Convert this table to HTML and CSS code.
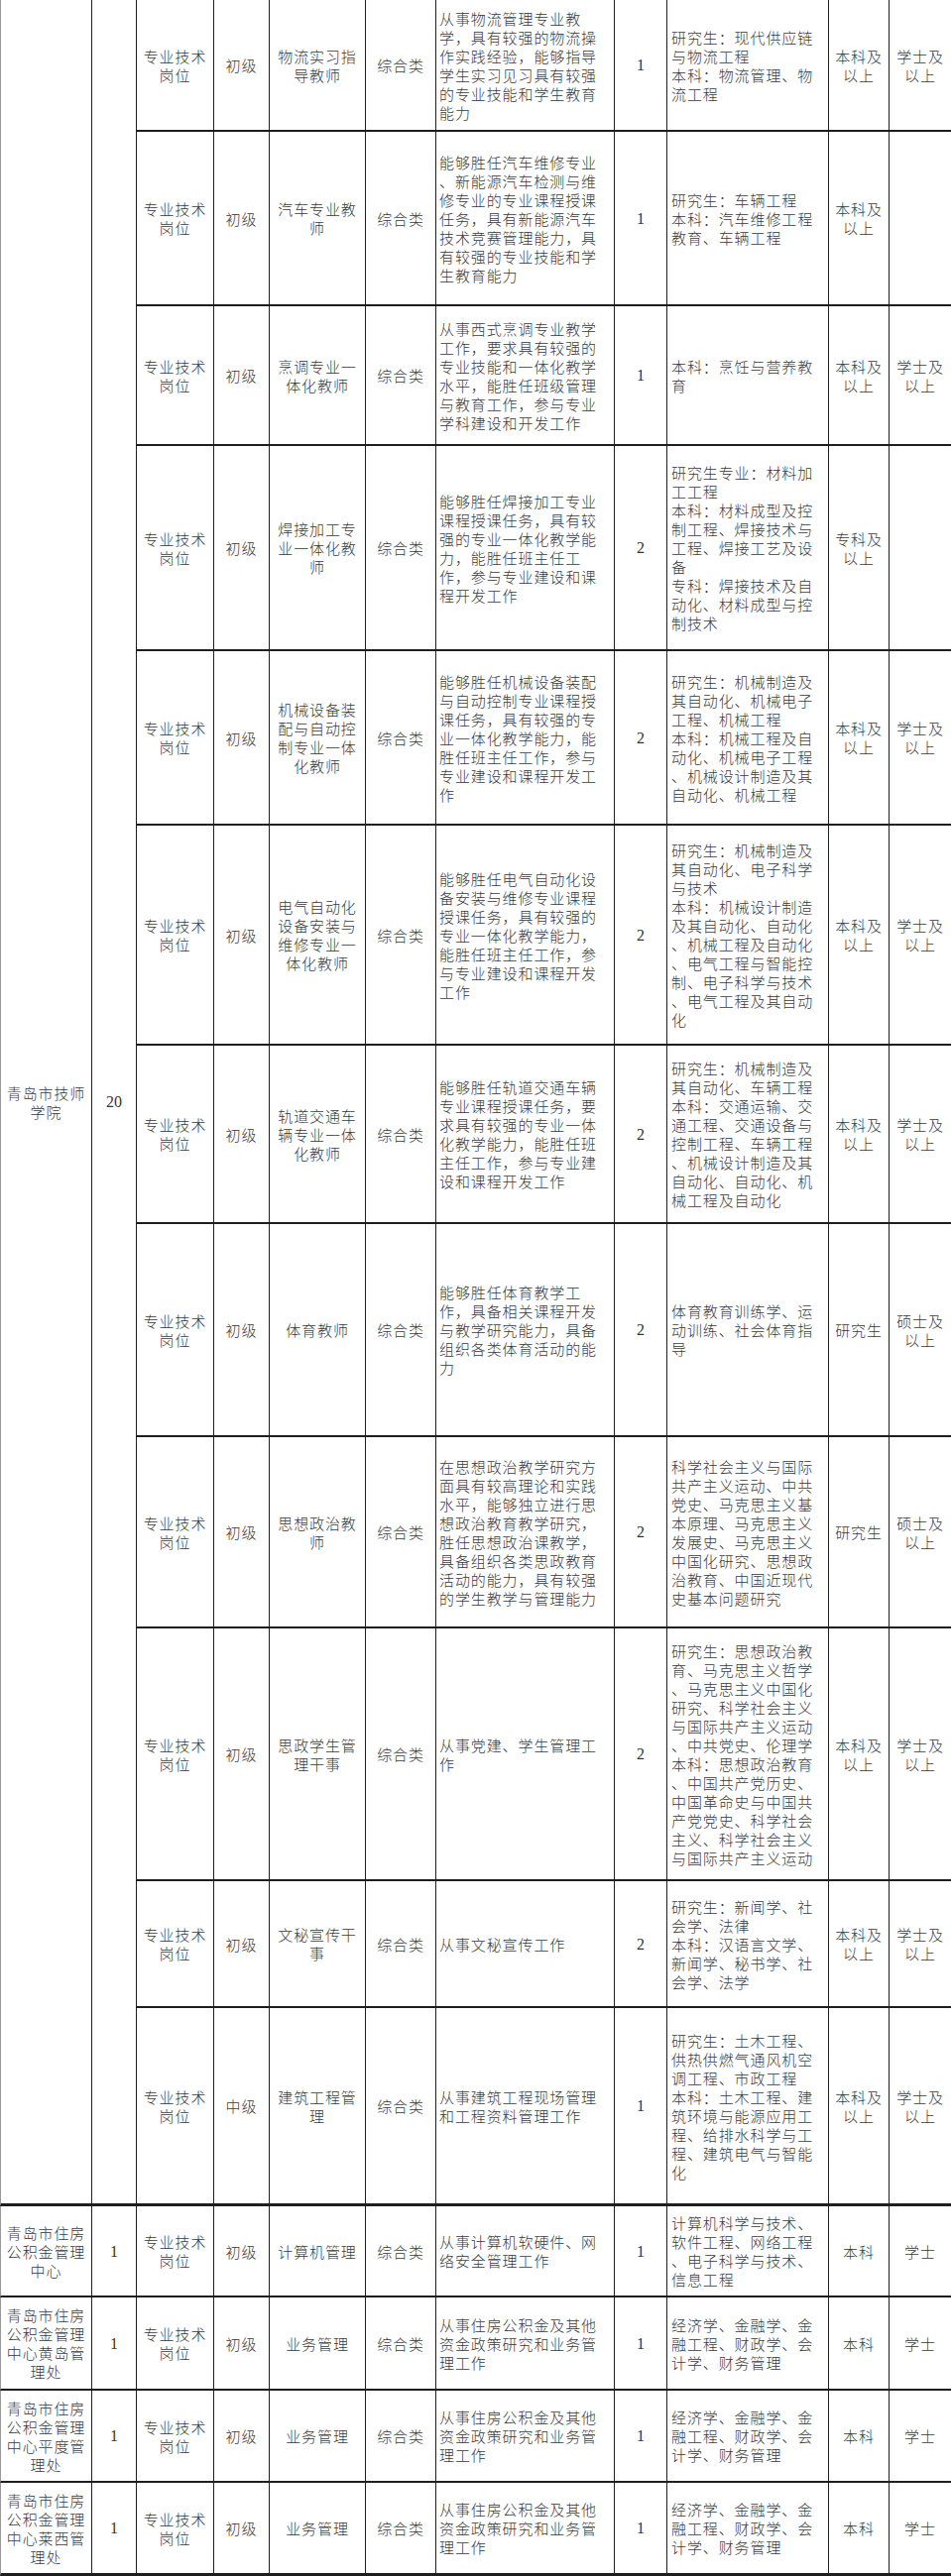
FILE: index.html
```html
<!DOCTYPE html>
<html lang="zh-CN">
<head>
<meta charset="utf-8">
<title>岗位表</title>
<link rel="stylesheet" href="styles.css">
</head>
<body>
<div class="sheet">
  <div class="cell c org span12 gend"><p>青岛市技师<br>学院</p></div>
  <div class="cell c num span12 gend"><p>20</p></div>

  <!-- row 1 -->
  <div class="cell c"><p>专业技术<br>岗位</p></div>
  <div class="cell c"><p>初级</p></div>
  <div class="cell c"><p>物流实习指<br>导教师</p></div>
  <div class="cell c"><p>综合类</p></div>
  <div class="cell l"><p>从事物流管理专业教<br>学，具有较强的物流操<br>作实践经验，能够指导<br>学生实习见习具有较强<br>的专业技能和学生教育<br>能力</p></div>
  <div class="cell c num"><p>1</p></div>
  <div class="cell l m"><p>研究生：现代供应链<br>与物流工程<br>本科：物流管理、物<br>流工程</p></div>
  <div class="cell c"><p>本科及<br>以上</p></div>
  <div class="cell c last"><p>学士及<br>以上</p></div>

  <!-- row 2 -->
  <div class="cell c"><p>专业技术<br>岗位</p></div>
  <div class="cell c"><p>初级</p></div>
  <div class="cell c"><p>汽车专业教<br>师</p></div>
  <div class="cell c"><p>综合类</p></div>
  <div class="cell l"><p>能够胜任汽车维修专业<br>、新能源汽车检测与维<br>修专业的专业课程授课<br>任务，具有新能源汽车<br>技术竞赛管理能力，具<br>有较强的专业技能和学<br>生教育能力</p></div>
  <div class="cell c num"><p>1</p></div>
  <div class="cell l m"><p>研究生：车辆工程<br>本科：汽车维修工程<br>教育、车辆工程</p></div>
  <div class="cell c"><p>本科及<br>以上</p></div>
  <div class="cell c last"><p></p></div>

  <!-- row 3 -->
  <div class="cell c"><p>专业技术<br>岗位</p></div>
  <div class="cell c"><p>初级</p></div>
  <div class="cell c"><p>烹调专业一<br>体化教师</p></div>
  <div class="cell c"><p>综合类</p></div>
  <div class="cell l"><p>从事西式烹调专业教学<br>工作，要求具有较强的<br>专业技能和一体化教学<br>水平，能胜任班级管理<br>与教育工作，参与专业<br>学科建设和开发工作</p></div>
  <div class="cell c num"><p>1</p></div>
  <div class="cell l m"><p>本科：烹饪与营养教<br>育</p></div>
  <div class="cell c"><p>本科及<br>以上</p></div>
  <div class="cell c last"><p>学士及<br>以上</p></div>

  <!-- row 4 -->
  <div class="cell c"><p>专业技术<br>岗位</p></div>
  <div class="cell c"><p>初级</p></div>
  <div class="cell c"><p>焊接加工专<br>业一体化教<br>师</p></div>
  <div class="cell c"><p>综合类</p></div>
  <div class="cell l"><p>能够胜任焊接加工专业<br>课程授课任务，具有较<br>强的专业一体化教学能<br>力，能胜任班主任工<br>作，参与专业建设和课<br>程开发工作</p></div>
  <div class="cell c num"><p>2</p></div>
  <div class="cell l m"><p>研究生专业：材料加<br>工工程<br>本科：材料成型及控<br>制工程、焊接技术与<br>工程、焊接工艺及设<br>备<br>专科：焊接技术及自<br>动化、材料成型与控<br>制技术</p></div>
  <div class="cell c"><p>专科及<br>以上</p></div>
  <div class="cell c last"><p></p></div>

  <!-- row 5 -->
  <div class="cell c"><p>专业技术<br>岗位</p></div>
  <div class="cell c"><p>初级</p></div>
  <div class="cell c"><p>机械设备装<br>配与自动控<br>制专业一体<br>化教师</p></div>
  <div class="cell c"><p>综合类</p></div>
  <div class="cell l"><p>能够胜任机械设备装配<br>与自动控制专业课程授<br>课任务，具有较强的专<br>业一体化教学能力，能<br>胜任班主任工作，参与<br>专业建设和课程开发工<br>作</p></div>
  <div class="cell c num"><p>2</p></div>
  <div class="cell l m"><p>研究生：机械制造及<br>其自动化、机械电子<br>工程、机械工程<br>本科：机械工程及自<br>动化、机械电子工程<br>、机械设计制造及其<br>自动化、机械工程</p></div>
  <div class="cell c"><p>本科及<br>以上</p></div>
  <div class="cell c last"><p>学士及<br>以上</p></div>

  <!-- row 6 -->
  <div class="cell c"><p>专业技术<br>岗位</p></div>
  <div class="cell c"><p>初级</p></div>
  <div class="cell c"><p>电气自动化<br>设备安装与<br>维修专业一<br>体化教师</p></div>
  <div class="cell c"><p>综合类</p></div>
  <div class="cell l"><p>能够胜任电气自动化设<br>备安装与维修专业课程<br>授课任务，具有较强的<br>专业一体化教学能力，<br>能胜任班主任工作，参<br>与专业建设和课程开发<br>工作</p></div>
  <div class="cell c num"><p>2</p></div>
  <div class="cell l m"><p>研究生：机械制造及<br>其自动化、电子科学<br>与技术<br>本科：机械设计制造<br>及其自动化、自动化<br>、机械工程及自动化<br>、电气工程与智能控<br>制、电子科学与技术<br>、电气工程及其自动<br>化</p></div>
  <div class="cell c"><p>本科及<br>以上</p></div>
  <div class="cell c last"><p>学士及<br>以上</p></div>

  <!-- row 7 -->
  <div class="cell c"><p>专业技术<br>岗位</p></div>
  <div class="cell c"><p>初级</p></div>
  <div class="cell c"><p>轨道交通车<br>辆专业一体<br>化教师</p></div>
  <div class="cell c"><p>综合类</p></div>
  <div class="cell l"><p>能够胜任轨道交通车辆<br>专业课程授课任务，要<br>求具有较强的专业一体<br>化教学能力，能胜任班<br>主任工作，参与专业建<br>设和课程开发工作</p></div>
  <div class="cell c num"><p>2</p></div>
  <div class="cell l m"><p>研究生：机械制造及<br>其自动化、车辆工程<br>本科：交通运输、交<br>通工程、交通设备与<br>控制工程、车辆工程<br>、机械设计制造及其<br>自动化、自动化、机<br>械工程及自动化</p></div>
  <div class="cell c"><p>本科及<br>以上</p></div>
  <div class="cell c last"><p>学士及<br>以上</p></div>

  <!-- row 8 -->
  <div class="cell c"><p>专业技术<br>岗位</p></div>
  <div class="cell c"><p>初级</p></div>
  <div class="cell c"><p>体育教师</p></div>
  <div class="cell c"><p>综合类</p></div>
  <div class="cell l"><p>能够胜任体育教学工<br>作，具备相关课程开发<br>与教学研究能力，具备<br>组织各类体育活动的能<br>力</p></div>
  <div class="cell c num"><p>2</p></div>
  <div class="cell l m"><p>体育教育训练学、运<br>动训练、社会体育指<br>导</p></div>
  <div class="cell c"><p>研究生</p></div>
  <div class="cell c last"><p>硕士及<br>以上</p></div>

  <!-- row 9 -->
  <div class="cell c"><p>专业技术<br>岗位</p></div>
  <div class="cell c"><p>初级</p></div>
  <div class="cell c"><p>思想政治教<br>师</p></div>
  <div class="cell c"><p>综合类</p></div>
  <div class="cell l"><p>在思想政治教学研究方<br>面具有较高理论和实践<br>水平，能够独立进行思<br>想政治教育教学研究，<br>胜任思想政治课教学，<br>具备组织各类思政教育<br>活动的能力，具有较强<br>的学生教学与管理能力</p></div>
  <div class="cell c num"><p>2</p></div>
  <div class="cell l m"><p>科学社会主义与国际<br>共产主义运动、中共<br>党史、马克思主义基<br>本原理、马克思主义<br>发展史、马克思主义<br>中国化研究、思想政<br>治教育、中国近现代<br>史基本问题研究</p></div>
  <div class="cell c"><p>研究生</p></div>
  <div class="cell c last"><p>硕士及<br>以上</p></div>

  <!-- row 10 -->
  <div class="cell c"><p>专业技术<br>岗位</p></div>
  <div class="cell c"><p>初级</p></div>
  <div class="cell c"><p>思政学生管<br>理干事</p></div>
  <div class="cell c"><p>综合类</p></div>
  <div class="cell l"><p>从事党建、学生管理工<br>作</p></div>
  <div class="cell c num"><p>2</p></div>
  <div class="cell l m"><p>研究生：思想政治教<br>育、马克思主义哲学<br>、马克思主义中国化<br>研究、科学社会主义<br>与国际共产主义运动<br>、中共党史、伦理学<br>本科：思想政治教育<br>、中国共产党历史、<br>中国革命史与中国共<br>产党党史、科学社会<br>主义、科学社会主义<br>与国际共产主义运动</p></div>
  <div class="cell c"><p>本科及<br>以上</p></div>
  <div class="cell c last"><p>学士及<br>以上</p></div>

  <!-- row 11 -->
  <div class="cell c"><p>专业技术<br>岗位</p></div>
  <div class="cell c"><p>初级</p></div>
  <div class="cell c"><p>文秘宣传干<br>事</p></div>
  <div class="cell c"><p>综合类</p></div>
  <div class="cell l"><p>从事文秘宣传工作</p></div>
  <div class="cell c num"><p>2</p></div>
  <div class="cell l m"><p>研究生：新闻学、社<br>会学、法律<br>本科：汉语言文学、<br>新闻学、秘书学、社<br>会学、法学</p></div>
  <div class="cell c"><p>本科及<br>以上</p></div>
  <div class="cell c last"><p>学士及<br>以上</p></div>

  <!-- row 12 -->
  <div class="cell c gend"><p>专业技术<br>岗位</p></div>
  <div class="cell c gend"><p>中级</p></div>
  <div class="cell c gend"><p>建筑工程管<br>理</p></div>
  <div class="cell c gend"><p>综合类</p></div>
  <div class="cell l gend"><p>从事建筑工程现场管理<br>和工程资料管理工作</p></div>
  <div class="cell c num gend"><p>1</p></div>
  <div class="cell l m gend"><p>研究生：土木工程、<br>供热供燃气通风机空<br>调工程、市政工程<br>本科：土木工程、建<br>筑环境与能源应用工<br>程、给排水科学与工<br>程、建筑电气与智能<br>化</p></div>
  <div class="cell c gend"><p>本科及<br>以上</p></div>
  <div class="cell c last gend"><p>学士及<br>以上</p></div>

  <!-- row 13 -->
  <div class="cell c org"><p>青岛市住房<br>公积金管理<br>中心</p></div>
  <div class="cell c num"><p>1</p></div>
  <div class="cell c"><p>专业技术<br>岗位</p></div>
  <div class="cell c"><p>初级</p></div>
  <div class="cell c"><p>计算机管理</p></div>
  <div class="cell c"><p>综合类</p></div>
  <div class="cell l"><p>从事计算机软硬件、网<br>络安全管理工作</p></div>
  <div class="cell c num"><p>1</p></div>
  <div class="cell l m"><p>计算机科学与技术、<br>软件工程、网络工程<br>、电子科学与技术、<br>信息工程</p></div>
  <div class="cell c"><p>本科</p></div>
  <div class="cell c last"><p>学士</p></div>

  <!-- row 14 -->
  <div class="cell c org"><p>青岛市住房<br>公积金管理<br>中心黄岛管<br>理处</p></div>
  <div class="cell c num"><p>1</p></div>
  <div class="cell c"><p>专业技术<br>岗位</p></div>
  <div class="cell c"><p>初级</p></div>
  <div class="cell c"><p>业务管理</p></div>
  <div class="cell c"><p>综合类</p></div>
  <div class="cell l"><p>从事住房公积金及其他<br>资金政策研究和业务管<br>理工作</p></div>
  <div class="cell c num"><p>1</p></div>
  <div class="cell l m"><p>经济学、金融学、金<br>融工程、财政学、会<br>计学、财务管理</p></div>
  <div class="cell c"><p>本科</p></div>
  <div class="cell c last"><p>学士</p></div>

  <!-- row 15 -->
  <div class="cell c org"><p>青岛市住房<br>公积金管理<br>中心平度管<br>理处</p></div>
  <div class="cell c num"><p>1</p></div>
  <div class="cell c"><p>专业技术<br>岗位</p></div>
  <div class="cell c"><p>初级</p></div>
  <div class="cell c"><p>业务管理</p></div>
  <div class="cell c"><p>综合类</p></div>
  <div class="cell l"><p>从事住房公积金及其他<br>资金政策研究和业务管<br>理工作</p></div>
  <div class="cell c num"><p>1</p></div>
  <div class="cell l m"><p>经济学、金融学、金<br>融工程、财政学、会<br>计学、财务管理</p></div>
  <div class="cell c"><p>本科</p></div>
  <div class="cell c last"><p>学士</p></div>

  <!-- row 16 -->
  <div class="cell c org tend"><p>青岛市住房<br>公积金管理<br>中心莱西管<br>理处</p></div>
  <div class="cell c num tend"><p>1</p></div>
  <div class="cell c tend"><p>专业技术<br>岗位</p></div>
  <div class="cell c tend"><p>初级</p></div>
  <div class="cell c tend"><p>业务管理</p></div>
  <div class="cell c tend"><p>综合类</p></div>
  <div class="cell l tend"><p>从事住房公积金及其他<br>资金政策研究和业务管<br>理工作</p></div>
  <div class="cell c num tend"><p>1</p></div>
  <div class="cell l m tend"><p>经济学、金融学、金<br>融工程、财政学、会<br>计学、财务管理</p></div>
  <div class="cell c tend"><p>本科</p></div>
  <div class="cell c last tend"><p>学士</p></div>
</div>
</body>
</html>
```

FILE: styles.css
```css
html, body {
  margin: 0;
  padding: 0;
  background: #ffffff;
}

body {
  font-family: "Noto Sans CJK SC", "Noto Sans", sans-serif;
  font-size: 15px;
  font-weight: 300;
  color: #3a3a3a;
}

.sheet {
  width: 959px;
  display: grid;
  grid-template-columns: 93px 45px 78px 56px 97px 71px 180px 53px 163px 61px 62px;
  grid-template-rows: 133px 176px 141px 207px 176px 222px 180px 215px 193px 255px 128px 200px 92px 94px 93px 94px;
}

.cell {
  box-sizing: border-box;
  display: flex;
  align-items: center;
  justify-content: center;
  border-right: 1px solid #1e1e1e;
  border-bottom: 2px solid #1e1e1e;
  overflow: hidden;
  white-space: nowrap;
}

.cell p {
  margin: 0;
  line-height: 19px;
  letter-spacing: 0.9px;
}

.c p {
  text-align: center;
}

.l {
  justify-content: flex-start;
  padding-left: 3px;
}

.l p {
  text-align: left;
}

.m {
  padding-left: 4px;
}

.num p {
  font-family: "Liberation Serif", "Times New Roman", serif;
  font-size: 16px;
  letter-spacing: 0;
  color: #333333;
}

.org {
  border-left: 1px solid #9a9a9a;
}

.span12 {
  grid-row: span 12;
}

.gend {
  border-bottom-width: 3px;
}

.tend {
  border-bottom-width: 3px;
}

.last {
  border-right: none;
}
```
